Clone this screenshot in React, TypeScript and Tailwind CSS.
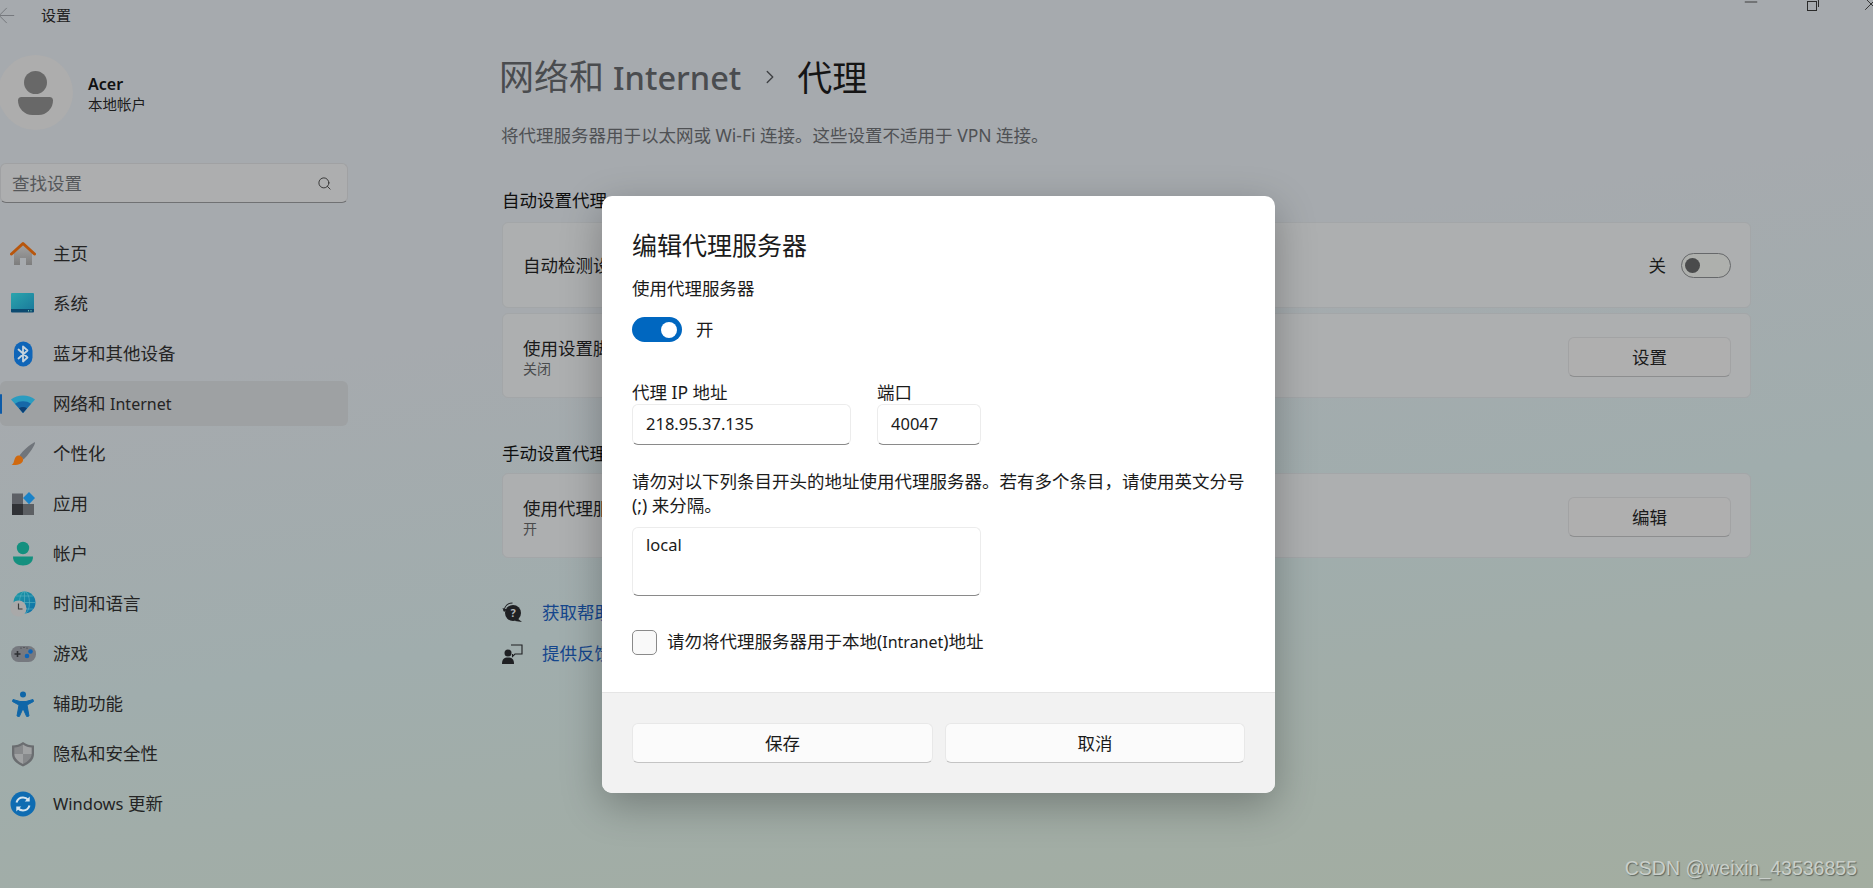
import React from "react";
import { ArrowLeft, Search, Minus, X, ChevronRight } from "lucide-react";

const Home = () => (
  <svg width="26" height="26" viewBox="0 0 26 26">
    <defs><linearGradient id="hb" x1="0" y1="0" x2="0" y2="1"><stop offset="0" stopColor="#a2a2a2" /><stop offset="1" stopColor="#7d7d7d" /></linearGradient></defs>
    <path d="M4 12 13 4l9 8v12h-6v-7h-6v7H4z" fill="url(#hb)" />
    <path d="M1.500 13 13 2.500 24.500 13" fill="none" stroke="#b8560c" strokeWidth="3" strokeLinecap="round" strokeLinejoin="round" />
  </svg>
);
const System = () => (
  <svg width="26" height="26" viewBox="0 0 26 26">
    <defs><linearGradient id="sb" x1="0" y1="0" x2="1" y2="1"><stop offset="0" stopColor="#2ba5ad" /><stop offset="1" stopColor="#1a7a9c" /></linearGradient></defs>
    <rect x="1" y="2" width="23" height="17" rx="1" fill="url(#sb)" />
    <path d="M1 18h23v2.500a1 1 0 0 1-1 1H2a1 1 0 0 1-1-1z" fill="#0c4a70" />
    <rect x="18" y="19.300" width="1" height="1" fill="#9ec" /><rect x="20.500" y="19.300" width="1" height="1" fill="#9ec" />
  </svg>
);
const Bluetooth = () => (
  <svg width="26" height="26" viewBox="0 0 26 26">
    <rect x="4" y="0.500" width="18.500" height="25" rx="9.200" fill="#0f65b8" />
    <path d="M8.500 8.500 17.500 16.500 13 20.500V5.500L17.500 9.500 8.500 17.500" fill="none" stroke="#c7d3dc" strokeWidth="1.800" strokeLinejoin="round" strokeLinecap="round" />
  </svg>
);
const Wifi = () => (
  <svg width="26" height="26" viewBox="0 0 26 26">
    <path d="M1 8.500C7.500 3.300 18.500 3.300 25 8.500L13 22z" fill="#2b9cc0" />
    <path d="M5 12.800C9.500 9.500 16.500 9.500 21 12.800L13 22z" fill="#1668a8" />
    <path d="M9 17.200C11.300 15.700 14.700 15.700 17 17.200L13 22z" fill="#0c3f74" />
  </svg>
);
const Brush = () => (
  <svg width="26" height="26" viewBox="0 0 26 26">
    <path d="M24 1.500c.8-.5 1.200 0 .9.900C23 7.500 18 14 13.500 18.500L9.500 14.500C13 9.500 19 4.500 24 1.500z" fill="#70757b" />
    <path d="M8.500 14.500c2.500 0 5 2.500 4.500 5-.5 2.800-4 5-11.500 4.500 2.500-1.500 2-3 3-5.500.5-2 2-4 4-4z" fill="#d0690f" />
  </svg>
);
const Apps = () => (
  <svg width="26" height="26" viewBox="0 0 26 26">
    <rect x="2" y="2.500" width="11" height="11" fill="#5d6066" />
    <rect x="2" y="13" width="11" height="11" fill="#303236" />
    <rect x="13" y="13" width="11" height="11" fill="#5c5f63" />
    <path d="M19 1 25 7 19 13.200 13 7z" fill="#1a82c7" />
  </svg>
);
const Account = () => (
  <svg width="26" height="26" viewBox="0 0 26 26">
    <circle cx="13" cy="7" r="6.200" fill="#14907f" />
    <path d="M3 15.500h20c.2 6-4.500 9-10 9s-10.200-3-10-9z" fill="#14907f" />
  </svg>
);
const Globe = () => (
  <svg width="26" height="26" viewBox="0 0 26 26">
    <defs><linearGradient id="gb" x1="0" y1="0" x2="1" y2="1"><stop offset="0" stopColor="#1d9ca5" /><stop offset="1" stopColor="#0f6ea8" /></linearGradient></defs>
    <circle cx="14.500" cy="11.500" r="11" fill="url(#gb)" />
    <path d="M14.500 .5V22.500M3.500 11.500H25.500M6 5h17M6 18h17" stroke="#56aebd" strokeWidth=".7" fill="none" />
    <ellipse cx="14.500" cy="11.500" rx="5" ry="11" stroke="#56aebd" strokeWidth=".7" fill="none" />
    <circle cx="8.500" cy="17.500" r="8" fill="#a9a9a9" />
    <path d="M8.500 12.500v5.500h4" stroke="#3b3b3b" strokeWidth="1.200" fill="none" />
  </svg>
);
const Game = () => (
  <svg width="26" height="26" viewBox="0 0 26 26">
    <rect x="1" y="5" width="25" height="16" rx="7.500" fill="#76797f" />
    <path d="M4.500 13h6M7.500 10v6" stroke="#2f3134" strokeWidth="1.600" />
    <circle cx="20.500" cy="10.500" r="2.300" fill="#0f65b8" /><circle cx="17" cy="15" r="2.300" fill="#0f65b8" />
    <circle cx="11" cy="7" r=".6" fill="#333" /><circle cx="14" cy="6.500" r=".6" fill="#333" /><circle cx="17" cy="7" r=".6" fill="#333" />
  </svg>
);
const Access = () => (
  <svg width="26" height="26" viewBox="0 0 26 26">
    <circle cx="13" cy="3.500" r="3" fill="#0f66a8" />
    <path d="M3 8.500 10 10.500h6L23 8.500 23.500 10.500 17 14 19 25l-2.300.6L13 17.500 9.300 25.600 7 25 9 14 2.500 10.500z" fill="#0f66a8" stroke="#0f66a8" strokeLinejoin="round" />
  </svg>
);
const Shield = () => (
  <svg width="26" height="26" viewBox="0 0 26 26">
    <path d="M13 1c3 2.500 7 3.500 11 3.500V13c0 6-5 10-11 12.500C7 23 2 19 2 13V4.500C6 4.500 10 3.500 13 1z" fill="#6a6d70" />
    <path d="M13 3.500c2.500 2 5.500 3 8.700 3V13H13z" fill="#a0a2a3" />
    <path d="M13 13H4.300c.3 4.500 4 7.800 8.700 10z" fill="#a0a2a3" />
    <path d="M13 3.500c-2.500 2-5.500 3-8.700 3V13H13zM13 13h8.700c-.3 4.500-4 7.800-8.700 10z" fill="#87898b" />
  </svg>
);
const Update = () => (
  <svg width="26" height="26" viewBox="0 0 26 26">
    <circle cx="13" cy="13" r="12.500" fill="#0f6cb2" />
    <path d="M6.500 11.500C7.500 8 10 6.500 13 6.500c2.300 0 4 1 5.300 2.500M19.500 14.500c-1 3.500-3.500 5-6.500 5-2.300 0-4-1-5.300-2.500" fill="none" stroke="#d6e4ee" strokeWidth="2" />
    <path d="M19.700 5.500v5h-5zM6.300 20.500v-5h5z" fill="#d6e4ee" />
  </svg>
);

const navItems: { key: string; label: React.ReactNode; icon: React.ReactNode; active?: boolean }[] = [
  { key: "home", label: "主页", icon: <Home /> },
  { key: "system", label: "系统", icon: <System /> },
  { key: "bt", label: "蓝牙和其他设备", icon: <Bluetooth /> },
  { key: "net", label: <>网络和 <span className="text-[16px]">Internet</span></>, icon: <Wifi />, active: true },
  { key: "personal", label: "个性化", icon: <Brush /> },
  { key: "apps", label: "应用", icon: <Apps /> },
  { key: "account", label: "帐户", icon: <Account /> },
  { key: "time", label: "时间和语言", icon: <Globe /> },
  { key: "game", label: "游戏", icon: <Game /> },
  { key: "access", label: "辅助功能", icon: <Access /> },
  { key: "privacy", label: "隐私和安全性", icon: <Shield /> },
  { key: "update", label: <><span className="text-[16.500px]">Windows</span> 更新</>, icon: <Update /> },
];

const Card = ({ title, sub, right, h }: { title: string; sub?: string; right: React.ReactNode; h: string }) => (
  <div className={`flex ${h} items-center justify-between rounded-md border border-[#a3a6a8] bg-[#adafb0] pl-5 pr-[19px]`}>
    <div className={`flex flex-col ${sub ? "pt-1" : ""}`}>
      <span className="text-[17.500px] leading-[22px] text-[#1a1a1a]">{title}</span>
      {sub && <span className="text-[14px] leading-[20px] text-[#4a4b4c]">{sub}</span>}
    </div>
    {right}
  </div>
);

const CardButton = ({ label }: { label: string }) => (
  <div className="mt-[3px] flex h-10 w-[163px] items-center justify-center rounded-md border border-[#a2a3a4] border-b-[#8d8e8f] bg-[#afafaf] text-[17.500px] text-[#1a1a1a]">
    {label}
  </div>
);

const Field = ({ value, w, h, top }: { value: string; w: string; h: string; top?: boolean }) => (
  <div className={`${w} ${h} flex ${top ? "items-start pt-[5px]" : "items-center"} rounded-md border border-[#ececec] border-b-[#8a8a8a] px-[13px] text-[16.500px] text-[#1a1a1a]`}>
    {value}
  </div>
);

const FooterButton = ({ label, w }: { label: string; w: string }) => (
  <div className={`flex h-10 ${w} items-center justify-center rounded-md border border-[#e8e8e8] border-b-[#c4c4c4] bg-[#fbfbfb] text-[17.500px] text-[#1a1a1a]`}>
    {label}
  </div>
);

export default function App() {
  return (
    <div className="relative h-[888px] w-[1873px] overflow-hidden bg-[linear-gradient(172deg,#a6aaae_0%,#a6aaae_35%,#a0adad_62%,#a3ada0_100%)] font-['Noto_Sans','Noto_Sans_CJK_SC',sans-serif] text-[#1a1a1a]">
      {/* title bar */}
      <div className="flex h-[30px] items-center">
        <ArrowLeft className="ml-[-6px] size-[25px] text-[#73767a]" strokeWidth={0.9} />
        <span className="ml-[22px] text-[15px] text-[#202020]">设置</span>
        <div className="ml-auto flex h-full items-start text-[#2a2a2a]">
          <Minus className="mr-[46px] mt-[-8px] size-[20px]" strokeWidth={1} />
          <div className="relative mr-[43px] mt-[1px] size-[10px] border border-[#2a2a2a]">
            <div className="absolute left-[2px] top-[-3px] h-[8px] w-[9px] rounded-tr-[2px] border-r border-t border-[#2a2a2a]" />
          </div>
          <X className="mr-[-9px] mt-[-7px] size-[22px]" strokeWidth={1} />
        </div>
      </div>

      <div className="flex">
        {/* sidebar */}
        <aside className="w-[498px] shrink-0 pt-[25px]">
          <div className="flex h-[75px] items-center">
            <div className="ml-[-2px] flex size-[75px] shrink-0 flex-col items-center justify-center rounded-full bg-[#adadad]">
              <div className="size-[23px] rounded-full bg-[#686868]" />
              <div className="mt-[3px] h-[18px] w-[35px] rounded-b-[16px] rounded-t-[4px] bg-[#686868]" />
            </div>
            <div className="ml-[15px] flex flex-col">
              <span className="text-[16px] font-semibold leading-[22px] text-[#111]">Acer</span>
              <span className="text-[14.500px] leading-[18px] text-[#1c1c1c]">本地帐户</span>
            </div>
          </div>
          <div className="mt-[33px] flex h-10 w-[348px] items-center justify-between rounded-md border border-[#a0a1a3] border-b-[#707173] bg-[#adaeaf] pl-[11px] pr-[15px] text-[17.500px] text-[#55575a]">
            查找设置
            <Search className="size-[15px] text-[#333]" strokeWidth={1.500} />
          </div>
          <nav className="mt-[28px] flex w-[348px] flex-col gap-[5px]">
            {navItems.map((it) => (
              <div key={it.key} className={`relative flex h-[45px] items-center rounded-md pl-[10px] text-[17.500px] text-[#242424] ${it.active ? "bg-[#9ea1a3]" : ""}`}>
                {it.active && <div className="absolute left-0 top-[13px] h-[20px] w-[2px] rounded-full bg-[#0d5ba8]" />}
                <span className="flex size-[26px] shrink-0 items-center justify-center">{it.icon}</span>
                <span className="ml-[17px]">{it.label}</span>
              </div>
            ))}
          </nav>
        </aside>

        {/* main */}
        <main className="w-[1253px] pt-[21px]">
          <div className="flex h-[52px] items-center pl-[1px] text-[35px] leading-none">
            <span className="text-[#4a4c4f]">网络和 <span className="text-[32.500px] font-medium">Internet</span></span>
            <ChevronRight className="ml-[18px] mr-[16px] size-[22px] text-[#3f4144]" strokeWidth={1.500} />
            <span className="text-[#151515]">代理</span>
          </div>
          <p className="mt-[19px] pl-[3px] text-[17.500px] leading-[26px] text-[#4f5154]">将代理服务器用于以太网或 Wi-Fi 连接。这些设置不适用于 VPN 连接。</p>
          <h2 className="mt-[39px] pl-[4px] text-[17.500px] font-normal leading-[26px] text-[#0f0f0f]">自动设置代理</h2>
          <div className="ml-[4px] mt-[9px] flex flex-col gap-[5px]">
            <Card
              h="h-[86px]"
              title="自动检测设置"
              right={
                <div className="flex items-center gap-[15px]">
                  <span className="text-[17.500px]">关</span>
                  <div className="flex h-[25px] w-[50px] items-center rounded-full border border-[#66686a] bg-[#aeb0ad] pl-[3px]">
                    <div className="size-[15px] rounded-full bg-[#4a4b4c]" />
                  </div>
                </div>
              }
            />
            <Card h="h-[85px]" title="使用设置脚本" sub="关闭" right={<CardButton label="设置" />} />
          </div>
          <h2 className="mt-[42px] pl-[4px] text-[17.500px] font-normal leading-[26px] text-[#0f0f0f]">手动设置代理</h2>
          <div className="ml-[4px] mt-[7px]">
            <Card h="h-[85px]" title="使用代理服务器" sub="开" right={<CardButton label="编辑" />} />
          </div>
          <div className="ml-[4px] mt-[43px] flex flex-col gap-[18px] text-[17.500px] text-[#15468c]">
            <div className="flex h-[23px] items-center gap-[19px]">
              <svg width="21" height="21" viewBox="0 0 21 21">
                <circle cx="11" cy="11" r="8" fill="#1f2023" />
                <path d="M15 16l5 4-7-1z" fill="#1f2023" />
                <path d="M2 9C2.500 4 6 1 10.500 1" stroke="#1f2023" strokeWidth="1.100" fill="none" />
                <path d="M.5 6 2 10l3-2.500z" fill="#1f2023" />
                <text x="11" y="15" fontSize="11" fontWeight="700" fill="#b0b4b6" textAnchor="middle">?</text>
              </svg>
              获取帮助
            </div>
            <div className="flex h-[23px] items-center gap-[19px]">
              <svg width="21" height="21" viewBox="0 0 21 21">
                <path d="M9 2h11v9h-7l-2.500 2.500V11" fill="none" stroke="#1f2023" strokeWidth="1.100" />
                <circle cx="6" cy="10" r="3.500" fill="#1f2023" />
                <path d="M0 21c0-5 2-6.500 6-6.500s6 1.500 6 6.500z" fill="#1f2023" />
              </svg>
              提供反馈
            </div>
          </div>
        </main>
      </div>

      <div className="absolute bottom-[8px] right-[16px] font-['Liberation_Sans',sans-serif] text-[19.500px] leading-[24px] text-[#c9cfca] [text-shadow:1px_1px_1px_rgba(70,75,70,0.7)]">CSDN @weixin_43536855</div>

      {/* dialog */}
      <div className="absolute left-[602px] top-[196px] flex h-[597px] w-[673px] flex-col overflow-hidden rounded-[10px] bg-white shadow-[0_12px_40px_rgba(0,0,0,0.28)]">
        <div className="flex-1 pl-[30px] pr-[28px]">
          <h1 className="mt-[31px] text-[25px] leading-[36px] text-[#1b1b1b]">编辑代理服务器</h1>
          <p className="mt-[13px] text-[17.500px] leading-[24px] text-[#1b1b1b]">使用代理服务器</p>
          <div className="mt-[17px] flex h-[25px] items-center gap-[14px]">
            <div className="flex h-[25px] w-[50px] items-center justify-end rounded-full bg-[#0067c0] pr-[5px]">
              <div className="size-[16px] rounded-full bg-white" />
            </div>
            <span className="text-[17.500px] text-[#1b1b1b]">开</span>
          </div>
          <div className="mt-[39px] flex gap-[26px]">
            <div className="flex flex-col">
              <span className="text-[17.500px] leading-[23px] text-[#1b1b1b]">代理 IP 地址</span>
              <Field value="218.95.37.135" w="w-[219px]" h="h-[41px]" />
            </div>
            <div className="flex flex-col">
              <span className="text-[17.500px] leading-[23px] text-[#1b1b1b]">端口</span>
              <Field value="40047" w="w-[104px]" h="h-[41px]" />
            </div>
          </div>
          <p className="mt-[24px] text-[17.500px] leading-[24px] text-[#1b1b1b]">请勿对以下列条目开头的地址使用代理服务器。若有多个条目，请使用英文分号 (;) 来分隔。</p>
          <div className="mt-[10px]">
            <Field value="local" w="w-[349px]" h="h-[69px]" top />
          </div>
          <div className="mt-[34px] flex h-[25px] items-center gap-[10px]">
            <div className="size-[25px] rounded-[5px] border border-[#8a8a8a] bg-[#f9f9f9]" />
            <span className="mt-[-3px] text-[17.500px] text-[#1b1b1b]">请勿将代理服务器用于本地(<span className="text-[16px]">Intranet</span>)地址</span>
          </div>
        </div>
        <div className="flex h-[101px] items-start gap-[12px] border-t border-[#e5e5e5] bg-[#f2f2f2] pl-[30px] pt-[30px]">
          <FooterButton label="保存" w="w-[301px]" />
          <FooterButton label="取消" w="w-[300px]" />
        </div>
      </div>
    </div>
  );
}
